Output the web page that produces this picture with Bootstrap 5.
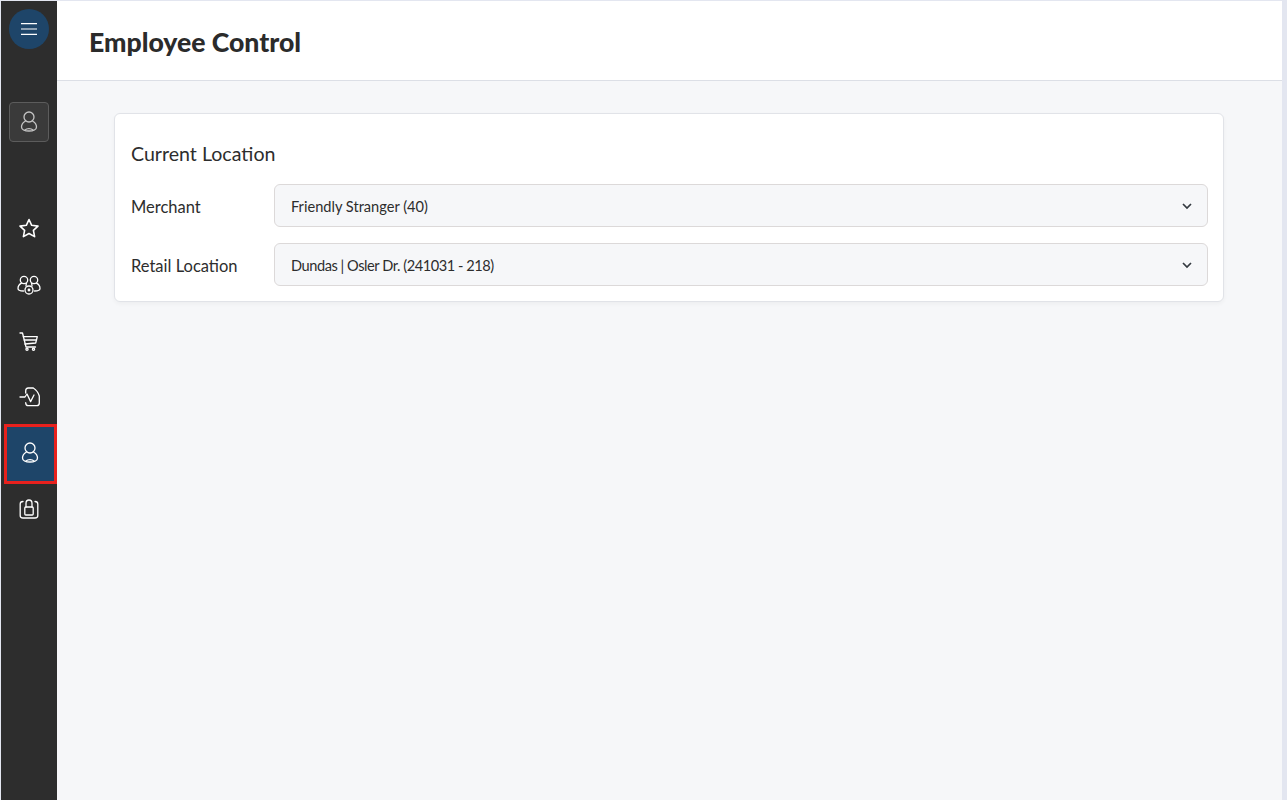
<!DOCTYPE html>
<html lang="en">
<head>
<meta charset="utf-8">
<title>Employee Control</title>
<link rel="stylesheet" href="https://cdn.jsdelivr.net/npm/bootstrap@5.3.0/dist/css/bootstrap.min.css">
<style>
html,body{height:100%;overflow:hidden}
body{background:#e3e6f0;font-family:"Lato","Liberation Sans",sans-serif;color:#2d2d2d}
.app-shell{height:800px;width:1282px;padding-top:1px;background:#e3e6f0}
.side-rail{width:56px;margin-left:1px;background:#2d2d2d;flex:none}
.rail-burger{width:40px;height:40px;margin-top:8px;border-radius:50%;background:#1e4569;border:0;padding:0}
.rail-user{width:40px;height:40px;margin-top:53px;margin-bottom:58px;border:1px solid #5c5c5c;border-radius:4px;background:#3a3a3a}
.rail-item{width:50px;height:56px;flex:none}
.rail-first{height:57px;padding-bottom:1px}
.rail-item svg{width:24px;height:24px;fill:none;stroke:#fff;stroke-width:1.3;stroke-linecap:round;stroke-linejoin:round}
.rail-user svg{width:24px;height:24px;fill:none;stroke:#c4c4c4;stroke-width:1.3;stroke-linecap:round;stroke-linejoin:round}
.rail-active{width:53px;height:60px;margin:-1px 0 -3px;padding-bottom:2px;align-self:flex-end;background:#1e4569;border:3px solid #e8211d}
.rail-active svg{margin-left:-2px}
.main-pane{background:#f6f7f9;min-width:0}
.page-head{height:80px;background:#fff;border-bottom:1px solid #dcdfe6;padding:4px 0 0 32px}
.page-head h1{font-size:26.6px;font-weight:900;margin:0;color:#2b2b2b}
.loc-card{margin:32px 58px 0 57px;height:189px;border:1px solid #e1e3e8;border-radius:6px;padding:16px 15px 16px 16px;box-shadow:0 2px 4px rgba(0,0,0,.04)}
.loc-title{font-size:19.6px;font-weight:400;margin:12px 0 18px;line-height:24px;color:#2d2d2d}
.loc-row{height:43px;margin-bottom:16px}
.loc-row:last-child{margin-bottom:0}
.loc-label{width:143px;flex:none;font-size:16.5px;margin:0;padding-top:3px;color:#2d2d2d}
.loc-select{height:43px;background-color:#f6f7f9;border:1px solid #dcd9d9;border-radius:6px;font-size:14.6px;color:#2d2d2d;padding:7px 36px 5px 16px;box-shadow:none;
background-image:url("data:image/svg+xml,%3csvg xmlns='http://www.w3.org/2000/svg' viewBox='0 0 10 8'%3e%3cpath fill='none' stroke='%23343a40' stroke-width='1.7' d='M1 2l4 4 4-4'/%3e%3c/svg%3e");background-size:10px 8px;background-position:right 15px center}
.loc-tight{letter-spacing:-.45px}
</style>
</head>
<body>
<div class="app-shell d-flex">
  <nav class="side-rail d-flex flex-column align-items-center">
    <button class="rail-burger d-flex align-items-center justify-content-center" aria-label="Menu" type="button">
      <svg width="16" height="12" viewBox="0 0 16 12" fill="none" stroke="#fff" stroke-width="1.2"><path d="M0 .6h16M0 6h16M0 11.400h16"/></svg>
    </button>
    <div class="rail-user d-flex align-items-center justify-content-center">
      <svg viewBox="0 0 24 24"><circle cx="12" cy="7" r="5"/><path d="M8.200 11.300C5.500 13 4.500 15.500 4.500 17c0 2.200 3 4 7.500 4s7.500-1.800 7.500-4c0-1.500-1-4-3.700-5.700"/><path d="M8 20c1-1 2.500-1.400 4-1.400s3 .4 4 1.400"/></svg>
    </div>
    <a class="rail-item rail-first d-flex align-items-center justify-content-center" href="#" aria-label="Favourites">
      <svg viewBox="0 0 24 24" style="stroke-width:1.600"><path d="M12 3.500l2.700 5.800 6.300.8-4.600 4.300 1.200 6.200-5.600-3.100-5.600 3.100 1.200-6.200L3 10.100l6.300-.8z"/></svg>
    </a>
    <a class="rail-item d-flex align-items-center justify-content-center" href="#" aria-label="Customers">
      <svg viewBox="0 0 24 24"><circle cx="7" cy="7" r="3.700"/><circle cx="17" cy="7" r="3.700"/><path d="M4.500 10.200C2 11.500 1 13.500 1 15.500c0 1.500 2 2.500 5.500 2.500"/><path d="M19.500 10.200C22 11.500 23 13.500 23 15.500c0 1.500-2 2.500-5.500 2.500"/><path d="M9.500 10.500c-.5 1-.5 1.500-.5 2.500M14.500 10.500c.5 1 .5 1.500.5 2.500"/><circle cx="12" cy="17" r="4"/><circle cx="12" cy="17" r=".8"/></svg>
    </a>
    <a class="rail-item d-flex align-items-center justify-content-center" href="#" aria-label="Cart">
      <svg viewBox="0 0 24 24"><path d="M3 4h2.500l3.500 14h9.500"/><path d="M6.300 7.700h14l-1.600 6.300-10.800 1"/><path d="M7.200 11h12.300"/><circle cx="10" cy="20.300" r="1.100"/><circle cx="16.500" cy="20.300" r="1.100"/></svg>
    </a>
    <a class="rail-item d-flex align-items-center justify-content-center" href="#" aria-label="Reports">
      <svg viewBox="0 0 24 24"><path d="M8.700 8V6c0-1.700 1-3 2.600-3h5c3 2 5 4.500 6 8v7c0 1.700-1 2.700-2.600 2.700h-8.400c-1.600 0-2.600-1.300-2.600-3"/><path d="M3 12h5l2-3 3.600 7.600L17 10"/></svg>
    </a>
    <a class="rail-item rail-active d-flex align-items-center justify-content-center" href="#" aria-label="Employees">
      <svg viewBox="0 0 24 24"><circle cx="12" cy="7" r="5"/><path d="M8.200 11.300C5.500 13 4.500 15.500 4.500 17c0 2.200 3 4 7.500 4s7.500-1.800 7.500-4c0-1.500-1-4-3.700-5.700"/><path d="M8 20c1-1 2.500-1.400 4-1.400s3 .4 4 1.400"/></svg>
    </a>
    <a class="rail-item d-flex align-items-center justify-content-center" href="#" aria-label="Store">
      <svg viewBox="0 0 24 24"><path d="M6 4.500c-1.500 0-2.800 1-2.800 2.500v11.500c0 1.500 1.300 2.500 2.800 2.500h12c1.500 0 2.800-1 2.800-2.500V7c0-1.500-1.300-2.500-2.800-2.500"/><rect x="7.800" y="10" width="8.400" height="8" rx="1"/><path d="M9 10V6.500C9 4.500 10.300 3 12 3s3 1.500 3 3.500V10"/></svg>
    </a>
  </nav>
  <main class="main-pane flex-grow-1 d-flex flex-column">
    <header class="page-head d-flex align-items-center"><h1>Employee Control</h1></header>
    <section class="loc-card bg-white">
      <h2 class="loc-title">Current Location</h2>
      <div class="loc-row d-flex align-items-center">
        <label class="loc-label" for="merchant">Merchant</label>
        <select class="form-select loc-select" id="merchant"><option>Friendly Stranger (40)</option></select>
      </div>
      <div class="loc-row d-flex align-items-center">
        <label class="loc-label" for="retail">Retail Location</label>
        <select class="form-select loc-select loc-tight" id="retail"><option>Dundas | Osler Dr. (241031 - 218)</option></select>
      </div>
    </section>
  </main>
</div>
<script src="https://cdn.jsdelivr.net/npm/bootstrap@5.3.0/dist/js/bootstrap.bundle.min.js"></script>
</body>
</html>
